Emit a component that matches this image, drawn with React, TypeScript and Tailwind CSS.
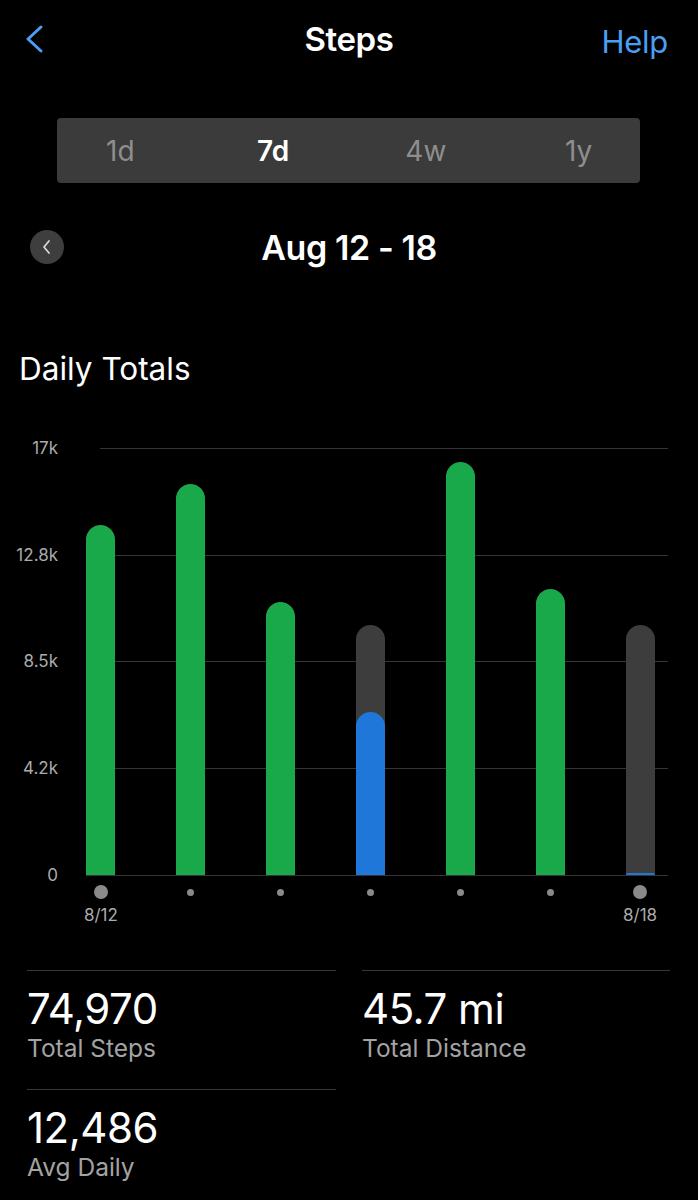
import React from "react";

const bars = [
  { total: 350, fill: 350, color: "bg-[#19a84a]" },
  { total: 391, fill: 391, color: "bg-[#19a84a]" },
  { total: 273, fill: 273, color: "bg-[#19a84a]" },
  { total: 250, fill: 163, color: "bg-[#1f78d9]" },
  { total: 413, fill: 413, color: "bg-[#19a84a]" },
  { total: 286, fill: 286, color: "bg-[#19a84a]" },
  { total: 250, fill: 2, color: "bg-[#1f78d9]" },
];

const grid = [
  { label: "17k", top: 0 },
  { label: "12.8k", top: 107 },
  { label: "8.5k", top: 213 },
  { label: "4.2k", top: 320 },
  { label: "0", top: 427 },
];

export default function App() {
  return (
    <div
      className="w-[698px] h-[1200px] bg-black text-white overflow-hidden"
      style={{ fontFamily: "Inter, 'Noto Sans', sans-serif" }}
    >
      {/* header */}
      <div className="relative h-[80px] flex items-center justify-center">
        <svg className="absolute left-[22px] top-[24px]" width="24" height="30" viewBox="0 0 24 30">
          <path d="M19 3 L6 15 L19 27" fill="none" stroke="#4a9ff5" strokeWidth="3" strokeLinecap="round" strokeLinejoin="round" />
        </svg>
        <div className="text-[33px] font-semibold tracking-[-0.4px]">Steps</div>
        <div className="absolute right-[30px] top-[19px] text-[31px] text-[#4a9ff5] tracking-[-0.3px]">Help</div>
      </div>

      {/* segment */}
      <div className="mt-[38px] mx-[57px] w-[583px] h-[65px] bg-[#3b3b3b] rounded-[4px] flex items-center">
        <div className="ml-[-13px] w-[611px] shrink-0 grid grid-cols-4 text-[28px]">
          <div className="text-center text-[#8e8e8e]">1d</div>
          <div className="text-center font-semibold text-white">7d</div>
          <div className="text-center text-[#8e8e8e]">4w</div>
          <div className="text-center text-[#8e8e8e]">1y</div>
        </div>
      </div>

      {/* date row */}
      <div className="relative mt-[47px] h-[34px] flex items-center justify-center">
        <div className="absolute left-[30px] top-0 w-[34px] h-[34px] rounded-full bg-[#3e3e3e] flex items-center justify-center">
          <svg width="12" height="16" viewBox="0 0 12 16">
            <path d="M8 2 L3 8 L8 14" fill="none" stroke="#d8d8d8" strokeWidth="1.8" strokeLinecap="round" strokeLinejoin="round" />
          </svg>
        </div>
        <div className="text-[34px] font-semibold tracking-[-0.4px]">Aug 12 - 18</div>
      </div>

      {/* Daily totals */}
      <div className="mt-[87px] ml-[19px] h-[36px] leading-[36px] text-[31.5px]">Daily Totals</div>

      {/* chart */}
      <div className="relative mt-[61px] h-[427px]">
        {grid.map((g) => (
          <React.Fragment key={g.label}>
            <div
              className={`absolute h-px bg-[#353535] ${g.label === "0" ? "left-[86px]" : "left-[100px]"} right-[30px]`}
              style={{ top: g.top }}
            />
            <div
              className="absolute right-[640px] -translate-y-1/2 text-[17px] text-[#ababab] leading-none"
              style={{ top: g.top }}
            >
              {g.label}
            </div>
          </React.Fragment>
        ))}
        <div className="absolute left-[56px] w-[629px] bottom-0 h-full grid grid-cols-7 items-end">
          {bars.map((b, i) => (
            <div key={i} className="flex justify-center items-end h-full">
              <div
                className="relative w-[29px] rounded-t-full bg-[#3d3d3d] overflow-hidden flex items-end"
                style={{ height: b.total }}
              >
                <div className={`w-full rounded-t-full ${b.color}`} style={{ height: b.fill }} />
              </div>
            </div>
          ))}
        </div>
      </div>

      {/* x axis */}
      <div className="ml-[56px] w-[629px] grid grid-cols-7 mt-[10px]">
        {bars.map((_, i) => {
          const big = i === 0 || i === 6;
          return (
            <div key={i} className="flex flex-col items-center">
              <div className="h-[14px] flex items-center">
                <div className={`rounded-full bg-[#8a8a8a] ${big ? "w-[14px] h-[14px]" : "w-[7px] h-[7px]"}`} />
              </div>
              <div className="h-[22px] mt-[5px] text-[17px] leading-[22px] text-[#ababab]">
                {i === 0 ? "8/12" : i === 6 ? "8/18" : ""}
              </div>
            </div>
          );
        })}
      </div>

      {/* stats */}
      <div className="mt-[44px] px-[27px] grid grid-cols-[309px_308px] gap-x-[26px]">
        <div className="border-t border-[#383838] pt-[14px] h-[119px]">
          <div className="text-[42px] leading-[48px] tracking-[-0.5px]">74,970</div>
          <div className="text-[24.5px] leading-[30px] text-[#a3a3a3]">Total Steps</div>
        </div>
        <div className="border-t border-[#383838] pt-[14px] h-[119px]">
          <div className="text-[42px] leading-[48px] tracking-[-0.5px]">45.7 mi</div>
          <div className="text-[24.5px] leading-[30px] text-[#a3a3a3]">Total Distance</div>
        </div>
        <div className="border-t border-[#383838] pt-[14px]">
          <div className="text-[42px] leading-[48px] tracking-[-0.5px]">12,486</div>
          <div className="text-[24.5px] leading-[30px] text-[#a3a3a3]">Avg Daily</div>
        </div>
      </div>
    </div>
  );
}
